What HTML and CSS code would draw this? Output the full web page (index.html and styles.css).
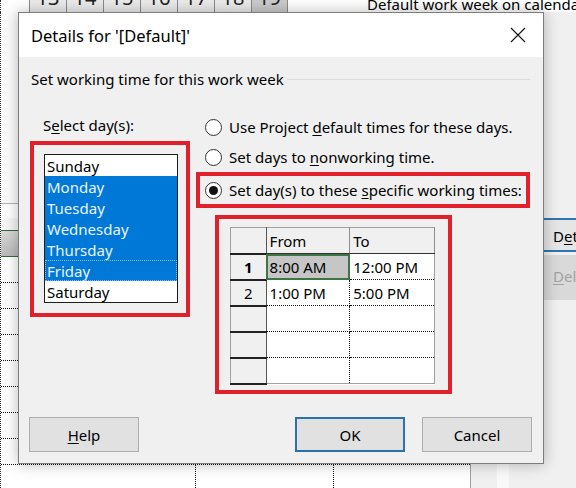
FILE: index.html
```html
<!DOCTYPE html>
<html lang="en">
<head>
    <meta charset="UTF-8">
    <title>Details for '[Default]'</title>
    <link rel="stylesheet" href="styles.css">
</head>
<body>
    <div class="app">
        <div class="app-top">
            <div class="cal-head">
                <div class="cal-cell">13</div>
                <div class="cal-cell">14</div>
                <div class="cal-cell">15</div>
                <div class="cal-cell">16</div>
                <div class="cal-cell">17</div>
                <div class="cal-cell">18</div>
                <div class="cal-cell today">19</div>
            </div>
            <div class="week-note">Default work week on calendar</div>
        </div>
        <div class="app-main">
            <div class="sheet">
                <div class="sheet-pane"></div>
                <div class="sheet-band"></div>
                <div class="sheet-bar"></div>
                <div class="sheet-rows">
                    <div class="sheet-row"><span></span><span></span><span></span></div>
                    <div class="sheet-row"><span></span><span></span><span></span></div>
                    <div class="sheet-row"><span></span><span></span><span></span></div>
                    <div class="sheet-row"><span></span><span></span><span></span></div>
                    <div class="sheet-row"><span></span><span></span><span></span></div>
                    <div class="sheet-row"><span></span><span></span><span></span></div>
                    <div class="sheet-row"><span></span><span></span><span></span></div>
                    <div class="sheet-row"><span></span><span></span><span></span></div>
                    <div class="sheet-row"><span></span><span></span><span></span></div>
                </div>
            </div>
            <div class="side">
                <div class="side-btn">D<u>e</u>tails...</div>
                <div class="side-btn disabled"><u>D</u>elete</div>
            </div>
        </div>
    </div>

    <div class="dialog">
        <div class="titlebar">
            <span class="title">Details for '[Default]'</span>
            <svg class="close" width="16" height="16" viewBox="0 0 16 16">
                <path d="M1 1 L15 15 M15 1 L1 15" stroke="#111" stroke-width="1.1" fill="none"/>
            </svg>
        </div>

        <div class="group-heading">
            <span>Set working time for this work week</span>
            <span class="rule"></span>
        </div>

        <div class="main">
            <div class="days-col">
                <div class="days-label">S<u>e</u>lect day(s):</div>
                <div class="mark days-mark">
                    <ul class="listbox">
                        <li>Sunday</li>
                        <li class="sel">Monday</li>
                        <li class="sel">Tuesday</li>
                        <li class="sel">Wednesday</li>
                        <li class="sel">Thursday</li>
                        <li class="sel focus">Friday</li>
                        <li>Saturday</li>
                    </ul>
                </div>
            </div>

            <div class="opts-col">
                <div class="radio-row"><span class="radio"></span><span>Use Project <u>d</u>efault times for these days.</span></div>
                <div class="radio-row"><span class="radio"></span><span>Set days to <u>n</u>onworking time.</span></div>
                <div class="mark radio-mark">
                    <div class="radio-row"><span class="radio checked"></span><span>Set day(s) to these <u>s</u>pecific working times:</span></div>
                </div>
                <div class="mark table-mark">
                    <table class="times">
                        <tr class="head">
                            <th class="num"></th>
                            <th>From</th>
                            <th>To</th>
                        </tr>
                        <tr>
                            <td class="num bold">1</td>
                            <td class="active">8:00 AM</td>
                            <td>12:00 PM</td>
                        </tr>
                        <tr>
                            <td class="num">2</td>
                            <td>1:00 PM</td>
                            <td>5:00 PM</td>
                        </tr>
                        <tr><td class="num"></td><td></td><td></td></tr>
                        <tr><td class="num"></td><td></td><td></td></tr>
                        <tr><td class="num"></td><td></td><td></td></tr>
                    </table>
                </div>
            </div>
        </div>

        <div class="buttons">
            <button class="btn"><u>H</u>elp</button>
            <button class="btn default">OK</button>
            <button class="btn">Cancel</button>
        </div>
    </div>
</body>
</html>
```

FILE: styles.css
```css
* {
    box-sizing: border-box;
}
body {
    margin: 0;
    font-family: 'Noto Sans', 'Open Sans', sans-serif;
    font-size: 15px;
    color: #000;
    background: #f0f0f0;
}
u {
    text-decoration-thickness: 1px;
    text-underline-offset: 2px;
}

/* application behind the dialog */
.app {
    width: 576px;
    height: 488px;
    overflow: hidden;
    background: #f0f0f0;
}
.app-top {
    height: 12px;
    display: flex;
    overflow: hidden;
    background: #fff;
    border-left: 1px dotted #333;
}
.cal-head {
    display: flex;
    margin-left: 28px;
    margin-top: -15px;
    height: 27px;
}
.cal-cell {
    width: 37px;
    height: 27px;
    border-left: 1px solid #8a8a8a;
    background: #ebebeb;
    font-size: 20px;
    line-height: 22px;
    padding-top: 2px;
    text-align: center;
    color: #222;
}
.cal-cell.today {
    background: #cbcbcb;
    border-right: 1px solid #8a8a8a;
}
.week-note {
    margin-left: auto;
    margin-top: -6px;
    font-size: 15px;
    white-space: nowrap;
    width: 209px;
    overflow: hidden;
}
.app-main {
    display: flex;
    height: 476px;
}
.sheet {
    width: 471px;
    background: #fff;
    border-right: 1px solid #a0a0a0;
    border-left: 1px dotted #333;
}
.sheet-pane {
    height: 192px;
    background: linear-gradient(to right, #fdfdfd, #e9e9e9);
    border-bottom: 1px solid #b4b4b4;
}
.sheet-band {
    height: 27px;
    border-top: 14px solid #fff;
    border-bottom: 1px solid #2f6b3c;
    background: #f6f6f6;
}
.sheet-bar {
    height: 26px;
    background: linear-gradient(to bottom, #d8d8d8, #b9b9b9);
    border-bottom: 1px solid #2f6b3c;
}
.sheet-row {
    display: flex;
    height: 26px;
    border-bottom: 1px dotted #111;
}
.sheet-row span {
    width: 195px;
    border-right: 1px dotted #111;
}
.sheet-row span:nth-child(2) {
    width: 138px;
}
.sheet-row span:last-child {
    flex: 1;
    border-right: none;
}
.side {
    flex: 1;
    display: flex;
    flex-direction: column;
    padding-top: 206px;
    padding-left: 68px;
    background: linear-gradient(to right, #f0f0f0 26px, #f9f9f9 26px, #f9f9f9 38px, #f0f0f0 38px);
}
.side-btn {
    height: 34px;
    line-height: 32px;
    padding-left: 14px;
    white-space: nowrap;
    overflow: hidden;
    background: #e6e6e6;
    border-top: 2px solid #2f75b5;
    border-bottom: 2px solid #2f75b5;
}
.side-btn.disabled {
    margin-top: 3px;
    height: 45px;
    line-height: 42px;
    color: #a3a3a3;
    background: #d9d9d9;
    border: none;
}

/* dialog */
.dialog {
    position: absolute;
    left: 18px;
    top: 12px;
    width: 526px;
    height: 452px;
    background: #f0f0f0;
    border: 1px solid #7d7d7d;
    box-shadow: 0 0 14px rgba(0, 0, 0, 0.28);
}
.titlebar {
    height: 44px;
    background: #fff;
    display: flex;
    align-items: center;
    padding: 0 17px 0 12px;
}
.title {
    font-size: 16.5px;
    flex: 1;
}
.close {
    display: block;
}
.group-heading {
    display: flex;
    align-items: center;
    margin: 12px 13px 0 12px;
    line-height: 20px;
}
.group-heading .rule {
    flex: 1;
    height: 1px;
    margin-left: 3px;
    background: #dcdcdc;
}
.main {
    display: flex;
    margin-left: 11px;
}
.mark {
    border: 4px solid #e0202b;
}
.days-col {
    width: 160px;
}
.days-label {
    margin-top: 26px;
    padding-left: 13px;
    line-height: 20px;
}
.days-mark {
    margin-top: 6px;
    height: 176px;
    padding: 9px 8px 10px 10px;
}
.listbox {
    list-style: none;
    margin: 0;
    padding: 0;
    height: 149px;
    background: #fff;
    border: 1px solid #1e1e1e;
}
.listbox li {
    height: 21px;
    line-height: 22px;
    padding-left: 2px;
}
.listbox li.sel {
    background: #0078d7;
    color: #eaf4fd;
}
.listbox li.focus {
    outline: 1px dotted #8cbbe6;
    outline-offset: -1px;
}
.opts-col {
    margin-left: 6px;
    margin-top: 23px;
}
.radio-row {
    display: flex;
    align-items: center;
    height: 30px;
    padding-left: 9px;
    white-space: nowrap;
}
.radio {
    width: 17px;
    height: 17px;
    border: 1px solid #333;
    border-radius: 50%;
    background: #fff;
    margin-right: 7px;
    display: flex;
    align-items: center;
    justify-content: center;
}
.radio.checked::after {
    content: "";
    width: 9px;
    height: 9px;
    border-radius: 50%;
    background: #111;
}
.radio-mark {
    width: 334px;
    height: 36px;
}
.radio-mark .radio-row {
    height: 28px;
    padding-left: 5px;
}
.table-mark {
    margin-top: 7px;
    margin-left: 19px;
    width: 237px;
    height: 179px;
    padding: 8px 13px 6px 11px;
}
.times {
    border-collapse: collapse;
    background: #fff;
    border: 1px solid #a0a0a0;
    table-layout: fixed;
}
.times th,
.times td {
    height: 26px;
    padding: 0 0 0 3px;
    font-weight: normal;
    text-align: left;
    white-space: nowrap;
    border-bottom: 1px dotted #111;
    border-right: 1px dotted #111;
}
.times th {
    background: #f0f0f0;
    border-right: 1px solid #8e8e8e;
    border-bottom: 1px solid #333;
}
.times th:nth-child(2),
.times td:nth-child(2) {
    width: 84px;
}
.times th:nth-child(3),
.times td:nth-child(3) {
    width: 85px;
}
.times .num {
    width: 36px;
    padding: 0;
    text-align: center;
    background: #f0f0f0;
    border-right: 1px solid #555;
    border-bottom: 2px solid #222;
}
.times .bold {
    font-weight: bold;
}
.times td.active {
    background: #c6c6c6;
    outline: 2px solid #3b7644;
    outline-offset: -2px;
}
.buttons {
    display: flex;
    gap: 17px;
    margin-top: 23px;
    padding: 0 11px 0 10px;
}
.btn {
    width: 110px;
    height: 35px;
    font-family: inherit;
    font-size: 15px;
    color: #000;
    background: #e1e1e1;
    border: 1px solid #adadad;
    border-radius: 0;
}
.btn:first-child {
    margin-right: auto;
}
.btn.default {
    border: 2px solid #2a72ad;
}
```
